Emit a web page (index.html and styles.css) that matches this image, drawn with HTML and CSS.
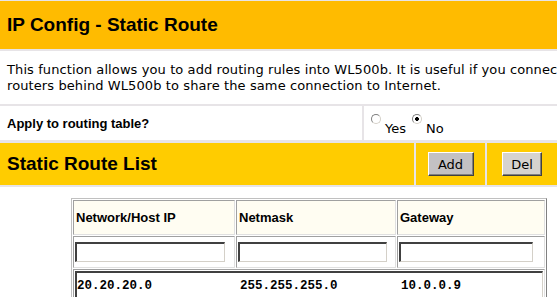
FILE: index.html
```html
<!DOCTYPE html>
<html lang="en">
<head>
    <meta charset="UTF-8">
    <title>IP Config - Static Route</title>
    <link rel="stylesheet" href="styles.css">
</head>
<body>
    <div class="page">
        <div class="title_bar">IP Config - Static Route</div>
        <div class="desc">
            This function allows you to add routing rules into WL500b. It is useful if you connect several<br>
            routers behind WL500b to share the same connection to Internet.
        </div>
        <div class="apply_row">
            <div class="apply_label">Apply to routing table?</div>
            <div class="apply_opts">
                <input type="radio" name="apply" value="1"><span class="opt">Yes</span>
                <input type="radio" name="apply" value="0" checked><span class="opt">No</span>
            </div>
        </div>
        <div class="list_bar">
            <div class="list_title">Static Route List</div>
            <div class="list_btn"><button class="btn btn_add">Add</button></div>
            <div class="list_btn"><button class="btn">Del</button></div>
        </div>
        <div class="list_area">
            <table class="routes">
                <tr class="head">
                    <td class="c1">Network/Host IP</td>
                    <td class="c2">Netmask</td>
                    <td class="c3">Gateway</td>
                </tr>
                <tr class="inputs">
                    <td><input type="text" class="field f1"></td>
                    <td><input type="text" class="field f2"></td>
                    <td><input type="text" class="field f3"></td>
                </tr>
                <tr>
                    <td colspan="3">
                        <div class="entries">
                            <div class="entry"><span class="e1">20.20.20.0</span><span class="e2">255.255.255.0</span><span>10.0.0.9</span></div>
                        </div>
                    </td>
                </tr>
            </table>
        </div>
    </div>
</body>
</html>
```

FILE: styles.css
```css
body{
    margin:0px;
    padding:0px;
    background-color:#ffffff;
    overflow:hidden;
}
.page{
    width:557px;
    padding-top:1px;
    display:flex;
    flex-direction:column;
    background-color:#e7e4e7;
    font-family:"Liberation Sans", Arial, sans-serif;
}
.title_bar{
    height:48px;
    padding-left:7px;
    display:flex;
    align-items:center;
    background-color:#ffbb00;
    font-size:19px;
    font-weight:bold;
    color:#000;
}
.desc{
    margin-top:2px;
    height:53px;
    padding-left:7px;
    display:flex;
    flex-direction:column;
    justify-content:center;
    background-color:#fff;
    font-family:"DejaVu Sans", Verdana, sans-serif;
    font-size:13px;
    line-height:16px;
    letter-spacing:0.1px;
    white-space:nowrap;
    overflow:hidden;
}
.apply_row{
    margin-top:2px;
    display:grid;
    grid-template-columns:362px 1fr;
    column-gap:2px;
    height:34px;
}
.apply_label{
    background-color:#fff;
    padding-left:7px;
    display:flex;
    align-items:center;
    font-size:13px;
    font-weight:bold;
}
.apply_opts{
    background-color:#fff;
    padding-left:7px;
    display:flex;
    align-items:center;
    font-family:"DejaVu Sans", Verdana, sans-serif;
    font-size:13px;
}
.apply_opts input{
    appearance:none;
    -webkit-appearance:none;
    box-sizing:border-box;
    width:10px;
    height:10px;
    margin:0px 4px 8px 0px;
    border:1px solid;
    border-color:#808080 #d4d0c8 #d4d0c8 #808080;
    border-radius:50%;
    background-color:#fff;
}
.apply_opts input:checked{
    background-image:radial-gradient(circle, #000 0px, #000 1.6px, #fff 2.2px);
}
.opt{
    margin-top:10px;
    margin-right:6px;
}
.list_bar{
    margin-top:3px;
    display:grid;
    grid-template-columns:414px 69px 1fr;
    column-gap:2px;
    height:42px;
}
.list_title{
    background-color:#ffcc00;
    padding-left:7px;
    display:flex;
    align-items:center;
    font-size:19px;
    font-weight:bold;
}
.list_btn{
    background-color:#ffcc00;
    display:flex;
    align-items:center;
    justify-content:center;
}
.btn{
    height:24px;
    width:40px;
    padding:0px;
    font-family:"DejaVu Sans", Verdana, sans-serif;
    font-size:13px;
    color:#000;
    background-color:#d6d3ce;
    border:1px solid;
    border-color:#fff #404040 #404040 #fff;
    box-shadow:inset -1px -1px 0px #808080;
}
.btn_add{
    width:46px;
    background-color:#c3c1c3;
}
.list_area{
    margin-top:2px;
    background-color:#fff;
    padding:11px 0px 0px 71px;
    height:110px;
}
.routes{
    border:1px solid;
    border-color:#c0c0c0 #808080 #808080 #c0c0c0;
    border-spacing:1px;
    width:472px;
}
.routes td{
    border:1px solid;
    border-color:#a0a0a0 #e0e0e0 #e0e0e0 #a0a0a0;
    padding:1px;
}
.head td{
    height:31px;
    background-color:#fffdf2;
    font-size:13px;
    font-weight:bold;
    padding-left:2px;
}
.c1{ width:157px; }
.c2{ width:155px; }
.inputs td{
    height:28px;
}
.field{
    box-sizing:border-box;
    height:20px;
    margin:0px;
    border:2px solid;
    border-color:#404040 #d4d0c8 #d4d0c8 #404040;
    border-width:2px 1px 1px 2px;
}
.f1{ width:150px; }
.f2{ width:149px; }
.f3{ width:134px; }
.entries{
    width:465px;
    height:40px;
    border:2px solid;
    border-color:#404040 #d4d0c8 #d4d0c8 #404040;
    border-width:2px 1px 1px 2px;
}
.entry{
    padding:6px 0px 0px 0px;
    font-family:"Liberation Mono", "Courier New", monospace;
    font-size:12.5px;
    font-weight:bold;
    display:flex;
}
.e1{ width:163px; }
.e2{ width:161px; }
```
